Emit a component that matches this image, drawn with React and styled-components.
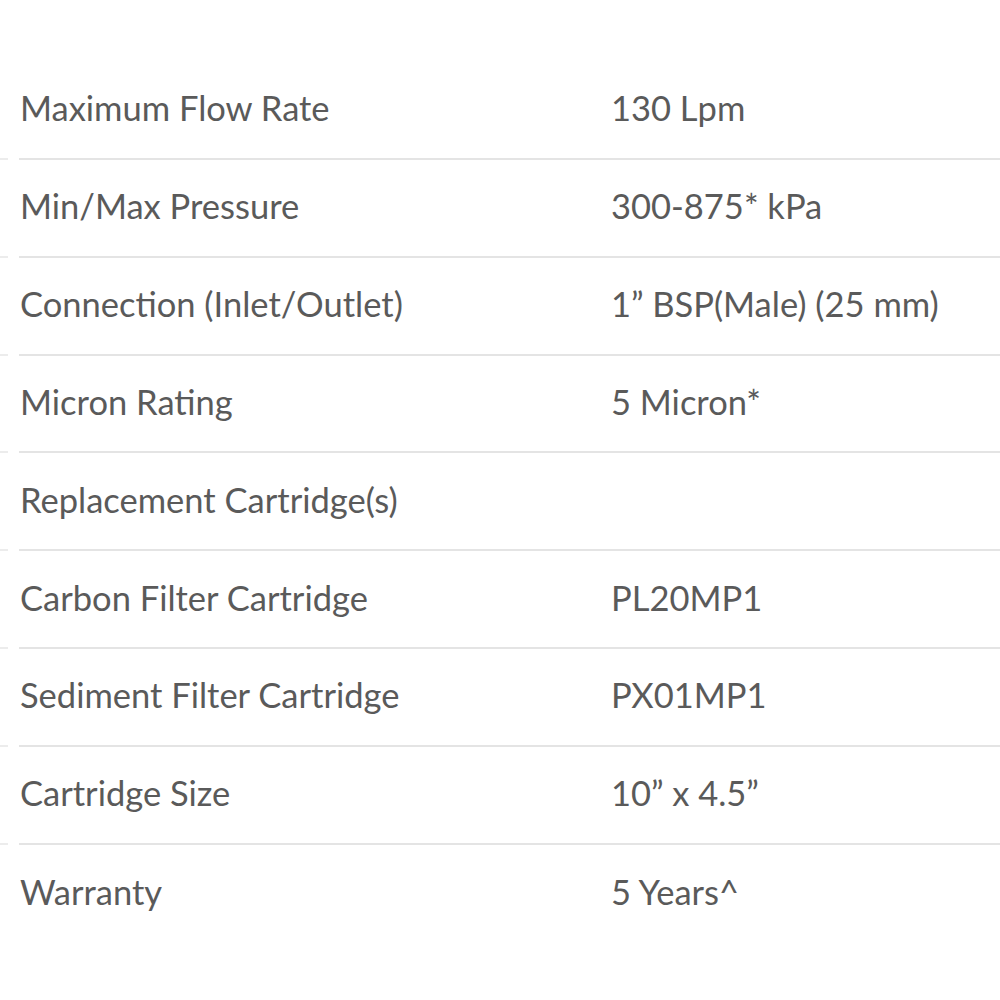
import React from 'react'
import styled, { createGlobalStyle } from 'styled-components'

const GlobalStyle = createGlobalStyle`
    html, body {
        margin: 0;
        padding: 0;
        background: #ffffff;
    }
    body {
        font-family: Lato, "Open Sans", sans-serif;
        -webkit-font-smoothing: antialiased;
    }
`

const specs = [
    ['Maximum Flow Rate', '130 Lpm'],
    ['Min/Max Pressure', '300-875* kPa'],
    ['Connection (Inlet/Outlet)', '1\u201D BSP(Male) (25 mm)'],
    ['Micron Rating', '5 Micron*'],
    ['Replacement Cartridge(s)', ''],
    ['Carbon Filter Cartridge', 'PL20MP1'],
    ['Sediment Filter Cartridge', 'PX01MP1'],
    ['Cartridge Size', '10\u201D x 4.5\u201D'],
    ['Warranty', '5 Years^'],
]

const Page = styled.div`
    width: 1000px;
    height: 1000px;
    overflow: hidden;
    padding-top: 62px;
    box-sizing: border-box;
`

const Row = styled.div`
    display: grid;
    grid-template-columns: 8px 1fr;
    column-gap: 11px;
    height: 97.85px;
`

const Stub = styled.div`
    border-bottom: ${({ $last }) => ($last ? 'none' : '2px solid #ececec')};
`

const Line = styled.div`
    display: grid;
    grid-template-columns: 591px 1fr;
    align-items: center;
    padding-bottom: 4px;
    border-bottom: ${({ $last }) => ($last ? 'none' : '2px solid #e4e4e4')};
`

const Cell = styled.div`
    padding-left: 1px;
    font-size: 34.5px;
    color: #5a5a5a;
    white-space: nowrap;
`

export default function App() {
    return (
        <>
            <GlobalStyle />
            <Page>
                {specs.map(([label, value], i) => {
                    const last = i === specs.length - 1
                    return (
                        <Row key={label}>
                            <Stub $last={last} />
                            <Line $last={last}>
                                <Cell>{label}</Cell>
                                <Cell>{value}</Cell>
                            </Line>
                        </Row>
                    )
                })}
            </Page>
        </>
    )
}
